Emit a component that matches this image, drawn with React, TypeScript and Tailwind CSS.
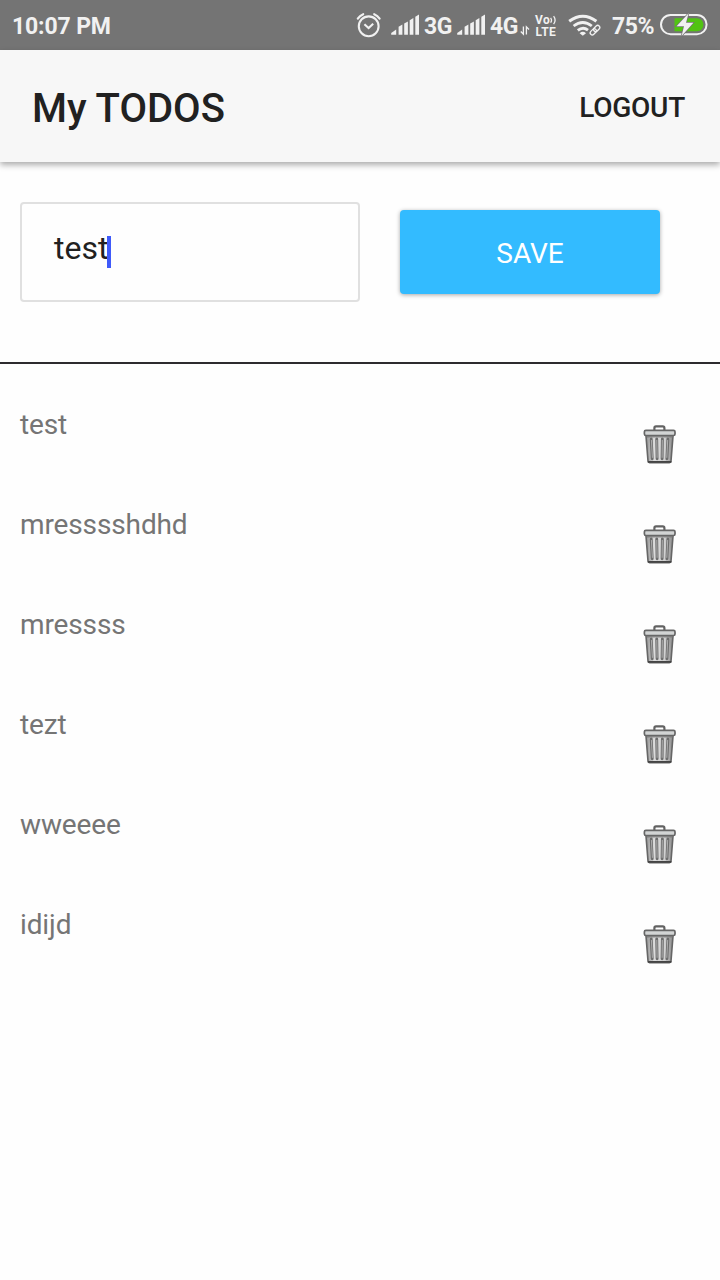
import React from "react";

const todos = ["test", "mresssshdhd", "mressss", "tezt", "wweeee", "idijd"];

function Alarm() {
  return (
    <svg className="h-[50px] w-[26px]" viewBox="356 0 26 50" fill="none" stroke="#f1f1f1" strokeWidth="2.1">
      <circle cx="368.7" cy="26.3" r="9.9" />
      <path d="M364.4 24.2l4.2 3.8 4.6-4.2" />
      <path d="M357.8 18.6q2-3 5.4-4.4M379.6 18.6q-2-3-5.4-4.4" strokeWidth="2.2" strokeLinecap="round" />
    </svg>
  );
}

function Signal() {
  return (
    <svg className="h-[50px] w-[30px]" viewBox="390 0 30 50" fill="#f1f1f1">
      <path d="M391.2 34.8v-1.8l5-3.6v5.4z" />
      <path d="M398.6 34.8v-8l3.8-2.4v10.4z" />
      <path d="M404.2 34.8V23.6l3.7-2.2v13.4z" />
      <path d="M409.7 34.8V20.2l3.7-2.2v16.8z" />
      <path d="M415.3 34.8V16.8l3.7-2.2v20.2z" />
    </svg>
  );
}

function DataArrows() {
  return (
    <svg className="ml-px h-[50px] w-3" viewBox="519 0 12 50" fill="none" stroke="#f1f1f1" strokeWidth="1.3">
      <path d="M523.4 26.6v7.6l-2.6-2.7M526.4 34.4v-7.6l2.6 2.7" />
    </svg>
  );
}

function Volte() {
  return (
    <div className="ml-[3px] flex w-[26px] flex-col pt-px text-[12px] font-bold leading-[12px]">
      <div className="flex h-3 items-center pl-px">
        <span className="tracking-[0.5px]">Vo</span>
        <svg className="-ml-px h-3 w-2 shrink-0" viewBox="0 0 8 12" fill="none" stroke="#f1f1f1" strokeWidth="1.3">
          <path d="M1.6 3.8q1.8 2.4 0 4.8M4.6 2.2q3 4 0 8" />
        </svg>
      </div>
      <span className="pl-[1.5px] tracking-[0.5px]">LTE</span>
    </div>
  );
}

function Wifi() {
  return (
    <svg className="ml-[7px] h-[50px] w-[35px]" viewBox="567 0 35 50" fill="none" stroke="#f1f1f1">
      <path d="M569.2 21.2q13.7-10 27.2 0" strokeWidth="3" />
      <path d="M573.6 26q9.2-7 18.2 0" strokeWidth="2.8" />
      <path d="M577.8 30.4q5.2-4.2 10.2-.2" strokeWidth="2.8" />
      <path d="M579.6 33.2q3.2-2.9 6.4 0l-3.2 2.6z" fill="#f1f1f1" stroke="none" />
      <g transform="rotate(-45 595 30)" strokeWidth="1.3">
        <rect x="589" y="28" width="7" height="4.2" rx="2.1" />
        <rect x="593.8" y="28" width="7" height="4.2" rx="2.1" />
      </g>
    </svg>
  );
}

function Battery() {
  return (
    <svg className="ml-1 h-[50px] w-[50px]" viewBox="659 0 50 50">
      <rect x="661" y="15" width="45.6" height="19.2" rx="9.6" fill="none" stroke="#f1f1f1" strokeWidth="2" />
      <path d="M674.5 18.2H697a6.4 6.4 0 0 1 0 13h-22.5z" fill="#51c312" />
      <path d="M688.6 13.2l-12 13h7.4l-2.4 9.8 11.8-13.2h-7.4z" fill="#f1f1f1" stroke="#747474" strokeWidth="1.4" paintOrder="stroke" />
    </svg>
  );
}

function Trash() {
  return (
    <svg className="h-12 w-10" viewBox="640 420 40 48">
      <defs>
        <linearGradient id="metal" x1="0" x2="1">
          <stop offset="0" stopColor="#8f8f8f" />
          <stop offset=".3" stopColor="#dcdcdc" />
          <stop offset=".7" stopColor="#d0d0d0" />
          <stop offset="1" stopColor="#858585" />
        </linearGradient>
      </defs>
      <path d="M654.4 430.6v-2.6q0-1.6 1.6-1.6h6.8q1.6 0 1.6 1.6v2.6" fill="none" stroke="#626262" strokeWidth="2.2" />
      <path d="M645.9 435l2.1 26q.1 1.6 1.6 1.6h19.8q1.5 0 1.6-1.6l2.1-26z" fill="url(#metal)" stroke="#666" strokeWidth="1.6" />
      <path d="M651.2 439l1 19.8M656.7 439l.4 19.8M662.4 439l-.3 19.8M667.9 439l-1 19.8" fill="none" stroke="#6d6d6d" strokeWidth="2.9" strokeLinecap="round" />
      <path d="M651.4 440l1 17.8M656.8 440l.3 17.8M662.3 440l-.2 17.8M667.7 440l-.9 17.8" fill="none" stroke="#adadad" strokeWidth="1" />
      <rect x="644.4" y="430.3" width="30.6" height="5.2" rx="1.5" fill="#d2d4d4" stroke="#666" strokeWidth="1.7" />
      <path d="M646.8 436.8h25.8" stroke="#777" strokeWidth="1.2" />
      <path d="M648.5 461.8h22.3" stroke="#444" strokeWidth="1.8" strokeLinecap="round" />
    </svg>
  );
}

export default function App() {
  return (
    <div className="flex h-[1280px] w-[720px] flex-col overflow-hidden bg-[#fefefe] font-[Roboto,sans-serif]">
      <div className="flex h-[50px] shrink-0 items-center bg-[#747474] pl-3 text-[#f1f1f1]">
        <span className="w-[344px] whitespace-nowrap pt-[3px] text-[23px] font-bold leading-7 tracking-[-0.14px]">10:07 PM</span>
        <Alarm />
        <div className="ml-2 flex items-center">
          <Signal />
          <span className="ml-1 w-7 whitespace-nowrap pt-1 text-[23px] font-bold leading-7 tracking-[-0.4px]">3G</span>
        </div>
        <div className="ml-1 flex items-center">
          <Signal />
          <span className="ml-1 w-7 whitespace-nowrap pt-1 text-[23px] font-bold leading-7 tracking-[-0.4px]">4G</span>
        </div>
        <DataArrows />
        <Volte />
        <Wifi />
        <span className="ml-2.5 w-[43px] whitespace-nowrap pt-[3px] text-[23px] font-bold leading-7 tracking-[-0.4px]">75%</span>
        <Battery />
      </div>

      <header className="flex h-28 shrink-0 items-center justify-between bg-[#f7f7f7] pl-8 pr-[35px] pt-1 text-[#212121] shadow-[0_3px_6px_rgba(0,0,0,0.32)]">
        <h1 className="pt-0.5 text-[40px] font-medium leading-[48px]">My TODOS</h1>
        <button className="text-[28px] font-medium leading-8 tracking-[-0.25px]">LOGOUT</button>
      </header>

      <section className="flex h-[202px] shrink-0 items-start border-b-2 border-[#2d2b2e] pl-5 pt-10">
        <div className="flex h-[100px] w-[340px] items-start rounded-[4px] border-2 border-[#e0e0e0] pl-8 pt-8 text-[32px] leading-8 text-[#212121]">
          <span className="-mt-1">test</span>
          <span className="-ml-px h-8 w-1 bg-[#3f5afa]" />
        </div>
        <button className="ml-10 mt-2 h-[84px] w-[260px] rounded-[4px] bg-[#33bbff] pt-1 text-[28px] leading-8 text-white shadow-[0_1px_4px_rgba(0,0,0,0.35)]">
          SAVE
        </button>
      </section>

      <ul className="flex flex-col pt-9">
        {todos.map((todo) => (
          <li key={todo} className="flex h-[100px] items-start justify-between pl-5 pr-10 pt-2 text-[28px] leading-8 text-[#757575]">
            <span className="pt-px tracking-[-0.12px]">{todo}</span>
            <button className="pt-3" aria-label="Delete">
              <Trash />
            </button>
          </li>
        ))}
      </ul>
    </div>
  );
}
